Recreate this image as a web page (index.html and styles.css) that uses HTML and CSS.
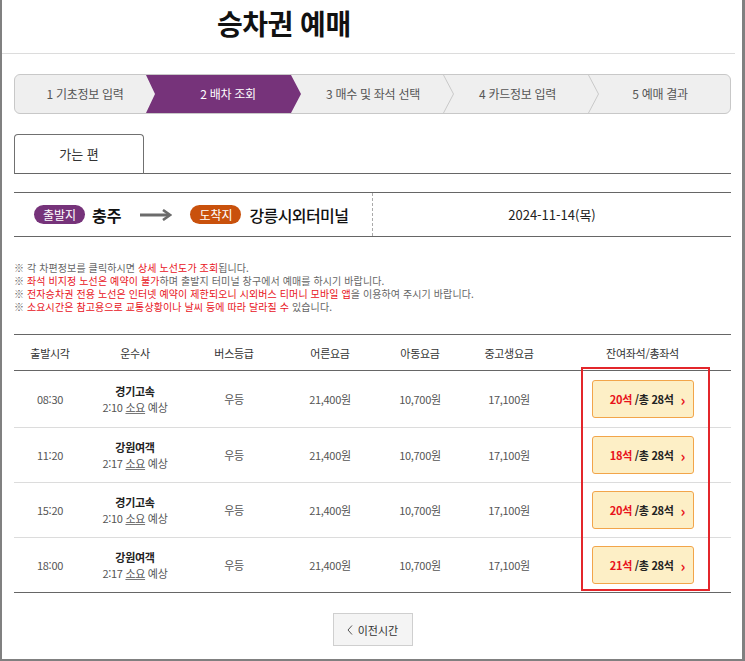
FILE: index.html
```html
<!DOCTYPE html>
<html lang="ko">
<head>
<meta charset="utf-8">
<title>승차권 예매</title>
<link rel="stylesheet" href="styles.css">
</head>
<body>
<div class="frame">
  <header class="page-head">
    <h1 class="page-title">승차권 예매</h1>
  </header>
  <div class="content">
    <div class="steps">
      <div class="step s1">1 기초정보 입력</div>
      <div class="step s2 active"><span>2 배차 조회</span></div>
      <div class="step s3">3 매수 및 좌석 선택<svg class="sep" width="12" height="38" viewBox="0 0 12 38"><polyline points="0.5,0 10.5,19 0.5,38" fill="none" stroke="#c9c9c9" stroke-width="1"/></svg></div>
      <div class="step s4">4 카드정보 입력<svg class="sep" width="12" height="38" viewBox="0 0 12 38"><polyline points="0.5,0 10.5,19 0.5,38" fill="none" stroke="#c9c9c9" stroke-width="1"/></svg></div>
      <div class="step s5">5 예매 결과</div>
    </div>

    <div class="tabs">
      <div class="tab">가는 편</div>
    </div>

    <div class="route">
      <div class="route-left">
        <span class="badge dep">출발지</span>
        <span class="city dep-city">충주</span>
        <svg class="arrow" width="32" height="12" viewBox="0 0 32 12"><line x1="0" y1="6" x2="29" y2="6" stroke="#6b6b6b" stroke-width="3"/><polyline points="23,1 30,6 23,11" fill="none" stroke="#6b6b6b" stroke-width="2.6"/></svg>
        <span class="badge arr">도착지</span>
        <span class="city arr-city">강릉시외터미널</span>
      </div>
      <div class="route-right">2024-11-14(목)</div>
    </div>

    <ul class="notes">
      <li>※ 각 차편정보를 클릭하시면 <em>상세 노선도가 조회</em>됩니다.</li>
      <li>※ <em>좌석 비지정 노선은 예약이 불가</em>하며 출발지 터미널 창구에서 예매를 하시기 바랍니다.</li>
      <li>※ <em>전자승차권 전용 노선은 인터넷 예약이 제한되오니 시외버스 티머니 모바일 앱</em>을 이용하여 주시기 바랍니다.</li>
      <li>※ <em>소요시간은 참고용으로 교통상황이나 날씨 등에 따라 달라질 수</em> 있습니다.</li>
    </ul>

    <div class="table-wrap">
      <table class="bus-table">
        <colgroup>
          <col class="c1"><col class="c2"><col class="c3"><col class="c4"><col class="c5"><col class="c6"><col class="c7">
        </colgroup>
        <thead>
          <tr><th>출발시각</th><th>운수사</th><th>버스등급</th><th>어른요금</th><th>아동요금</th><th>중고생요금</th><th>잔여좌석/총좌석</th></tr>
        </thead>
        <tbody>
          <tr class="first">
            <td>08:30</td>
            <td><div class="company">경기고속</div><div class="dur">2:10 <u>소요</u> 예상</div></td>
            <td>우등</td><td>21,400원</td><td>10,700원</td><td>17,100원</td>
            <td><button class="seat"><b class="remain">20석</b>&nbsp;/총 28석<span class="chev">›</span></button></td>
          </tr>
          <tr>
            <td>11:20</td>
            <td><div class="company">강원여객</div><div class="dur">2:17 <u>소요</u> 예상</div></td>
            <td>우등</td><td>21,400원</td><td>10,700원</td><td>17,100원</td>
            <td><button class="seat"><b class="remain">18석</b>&nbsp;/총 28석<span class="chev">›</span></button></td>
          </tr>
          <tr>
            <td>15:20</td>
            <td><div class="company">경기고속</div><div class="dur">2:10 <u>소요</u> 예상</div></td>
            <td>우등</td><td>21,400원</td><td>10,700원</td><td>17,100원</td>
            <td><button class="seat"><b class="remain">20석</b>&nbsp;/총 28석<span class="chev">›</span></button></td>
          </tr>
          <tr>
            <td>18:00</td>
            <td><div class="company">강원여객</div><div class="dur">2:17 <u>소요</u> 예상</div></td>
            <td>우등</td><td>21,400원</td><td>10,700원</td><td>17,100원</td>
            <td><button class="seat"><b class="remain">21석</b>&nbsp;/총 28석<span class="chev">›</span></button></td>
          </tr>
        </tbody>
      </table>
      <div class="highlight"></div>
    </div>

    <div class="pager">
      <button class="prev"><svg width="6" height="10" viewBox="0 0 6 10"><polyline points="5,0.5 1,5 5,9.5" fill="none" stroke="#555" stroke-width="1"/></svg>이전시간</button>
    </div>
  </div>
</div>
</body>
</html>
```

FILE: styles.css
```css
* { box-sizing: border-box; }
html, body { margin: 0; padding: 0; background: #fff; }
body {
  font-family: "Noto Sans CJK KR", "Noto Sans", sans-serif;
  color: #333;
}
.frame {
  width: 745px;
  height: 661px;
  border-left: 2px solid #808080;
  border-right: 3px solid #808080;
  border-bottom: 2px solid #808080;
  overflow: hidden;
}
.page-head {
  width: 733px;
  height: 54px;
  border-bottom: 1px solid #dcdcdc;
  padding-left: 215px;
}
.page-title {
  margin: 0;
  font-size: 28px;
  font-weight: 700;
  line-height: 46px;
  color: #111;
  letter-spacing: -0.5px;
}
.content {
  margin-left: 12px;
  width: 717px;
}
/* steps */
.steps {
  margin-top: 20px;
  height: 40px;
  border: 1px solid #c8c8c8;
  border-radius: 6px;
  background: #efefef;
  display: flex;
  overflow: hidden;
}
.step {
  position: relative;
  height: 38px;
  line-height: 38px;
  text-align: center;
  font-size: 12px;
  color: #555;
  letter-spacing: -0.3px;
  white-space: nowrap;
}
.s1 { width: 140px; }
.s2 { width: 146px; }
.s3 { width: 144px; }
.s4 { width: 145px; }
.s5 { flex: 1; }
.step.active { color: #fff; }
.step.active span { position: relative; z-index: 1; }
.step.active::before {
  content: "";
  position: absolute;
  top: 0;
  left: -9px;
  width: 155px;
  height: 38px;
  background: #76337a;
  clip-path: polygon(0 0, 145px 0, 155px 50%, 145px 100%, 0 100%, 9px 50%);
}
.sep { position: absolute; top: 0; right: -10px; }
/* tabs */
.tabs {
  margin-top: 20px;
  border-bottom: 1px solid #666;
  height: 40px;
  display: flex;
}
.tab {
  width: 130px;
  height: 40px;
  border: 1px solid #707070;
  border-bottom: none;
  border-radius: 4px 4px 0 0;
  text-align: center;
  line-height: 38px;
  font-size: 13px;
  color: #333;
}
/* route */
.route {
  margin-top: 18px;
  height: 45px;
  border-top: 1px solid #666;
  border-bottom: 1px solid #666;
  display: flex;
}
.route-left {
  width: 359px;
  border-right: 1px dashed #aaa;
  display: flex;
  align-items: center;
  padding-left: 20px;
}
.badge {
  display: inline-block;
  width: 51px;
  height: 19px;
  border-radius: 10px;
  color: #fff;
  font-size: 12px;
  line-height: 19px;
  text-align: center;
}
.badge.dep { background: #76337a; }
.badge.arr { background: #c9510c; }
.city { color: #111; }
.dep-city { font-size: 16px; font-weight: 700; margin-left: 7px; }
.arrow { margin: 0 18px 0 19px; }
.arr-city { font-size: 16px; font-weight: 500; margin-left: 8px; letter-spacing: -0.6px; }
.route-right {
  flex: 1;
  display: flex;
  align-items: center;
  justify-content: center;
  font-size: 13px;
  color: #222;
}
/* notes */
.notes {
  list-style: none;
  margin: 24px 0 0;
  padding: 0;
  font-size: 10px;
  line-height: 13px;
  color: #666;
  letter-spacing: 0.1px;
}
.notes em { font-style: normal; color: #e8121b; }
/* table */
.table-wrap { position: relative; margin-top: 21px; }
.bus-table {
  width: 717px;
  border-collapse: collapse;
  table-layout: fixed;
  border-top: 1px solid #666;
  border-bottom: 1px solid #666;
}
.c1 { width: 72px; }
.c2 { width: 98px; }
.c3 { width: 100px; }
.c4 { width: 92px; }
.c5 { width: 88px; }
.c6 { width: 90px; }
.c7 { width: 177px; }
.bus-table th {
  height: 36px;
  font-size: 11px;
  font-weight: 400;
  color: #333;
  border-bottom: 1px solid #666;
  padding: 0;
  letter-spacing: -0.3px;
}
.bus-table td {
  height: 55px;
  padding: 0;
  text-align: center;
  font-size: 11px;
  color: #555;
  border-bottom: 1px solid #dcdcdc;
  line-height: 16px;
  letter-spacing: -0.3px;
}
.bus-table tr.first td { height: 57px; }
.bus-table tbody tr:last-child td { border-bottom: none; }
.company { font-weight: 700; color: #222; }
.dur u { text-decoration-color: #777; }
.seat {
  width: 102px;
  height: 38px;
  background: #fdefc6;
  border: 1px solid #f2a54a;
  border-radius: 3px;
  font-family: inherit;
  font-size: 11px;
  font-weight: 700;
  color: #222;
  padding: 0 0 0 10px;
  display: inline-flex;
  align-items: center;
  justify-content: center;
  vertical-align: middle;
  letter-spacing: -0.3px;
}
.remain { color: #e8121b; font-weight: 700; }
.chev { color: #e8121b; font-size: 15px; margin-left: 7px; line-height: 1; font-weight: 700; }
.highlight {
  position: absolute;
  left: 567px;
  top: 33px;
  width: 129px;
  height: 224px;
  border: 2px solid #e3262b;
  pointer-events: none;
}
/* pager */
.pager {
  margin-top: 20px;
  display: flex;
  justify-content: center;
}
.prev {
  width: 80px;
  height: 33px;
  background: #f4f4f4;
  border: 1px solid #cfcfcf;
  font-family: inherit;
  font-size: 11px;
  color: #333;
  display: inline-flex;
  align-items: center;
  justify-content: center;
  gap: 5px;
  padding: 0;
}
```
